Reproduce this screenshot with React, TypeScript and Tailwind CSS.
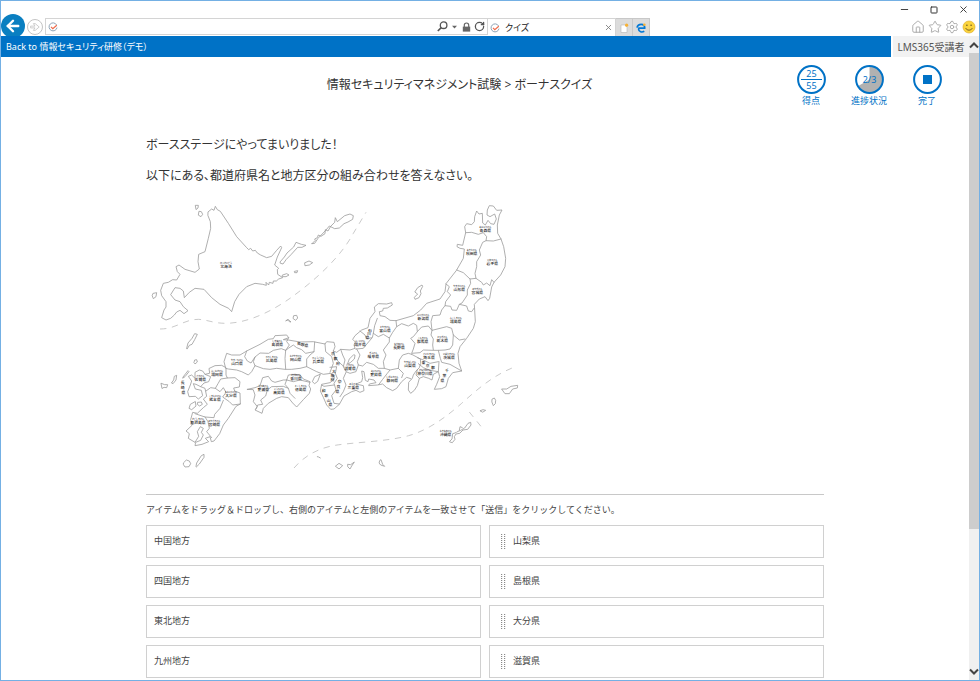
import { useState } from "react";
import { ArrowLeft, Home, Minus, RotateCw, Settings, Square, Star, X } from "lucide-react";

interface MapLabel {
  name: string;
  kana: string;
  x: number;
  y: number;
}

interface StackedLabel {
  chars: { c: string; x: number; y: number }[];
}

const groups = ["中国地方", "四国地方", "東北地方", "九州地方"];
const prefectures = ["山梨県", "島根県", "大分県", "滋賀県"];

// Horizontal labels, centred on x with y as the baseline
const labels: MapLabel[] = [
  { name: "北海道", kana: "ほっかいどう", x: 258, y: 218 },
  { name: "青森県", kana: "あおもりけん", x: 1036, y: 111 },
  { name: "秋田県", kana: "あきたけん", x: 995, y: 180 },
  { name: "岩手県", kana: "いわてけん", x: 1057, y: 209 },
  { name: "山形県", kana: "やまがたけん", x: 958, y: 287 },
  { name: "宮城県", kana: "みやぎけん", x: 1012, y: 298 },
  { name: "福島県", kana: "ふくしまけん", x: 947, y: 384 },
  { name: "新潟県", kana: "にいがたけん", x: 850, y: 376 },
  { name: "富山県", kana: "とやまけん", x: 735, y: 411 },
  { name: "福井県", kana: "ふくいけん", x: 660, y: 452 },
  { name: "岐阜県", kana: "ぎふけん", x: 700, y: 489 },
  { name: "長野県", kana: "ながのけん", x: 777, y: 461 },
  { name: "群馬県", kana: "ぐんまけん", x: 848, y: 445 },
  { name: "栃木県", kana: "とちぎけん", x: 907, y: 441 },
  { name: "埼玉県", kana: "さいたまけん", x: 867, y: 491 },
  { name: "茨城県", kana: "いばらきけん", x: 927, y: 491 },
  { name: "山梨県", kana: "やまなしけん", x: 810, y: 516 },
  { name: "愛知県", kana: "あいちけん", x: 708, y: 544 },
  { name: "静岡県", kana: "しずおかけん", x: 757, y: 561 },
  { name: "神奈川県", kana: "かながわけん", x: 855, y: 540 },
  { name: "滋賀県", kana: "しがけん", x: 630, y: 526 },
  { name: "三重県", kana: "みえけん", x: 640, y: 583 },
  { name: "島根県", kana: "しまねけん", x: 412, y: 452 },
  { name: "山口県", kana: "やまぐちけん", x: 291, y: 509 },
  { name: "広島県", kana: "ひろしまけん", x: 395, y: 502 },
  { name: "岡山県", kana: "おかやまけん", x: 467, y: 499 },
  { name: "兵庫県", kana: "ひょうごけん", x: 535, y: 503 },
  { name: "福岡県", kana: "ふくおかけん", x: 231, y: 543 },
  { name: "佐賀県", kana: "さがけん", x: 181, y: 558 },
  { name: "熊本県", kana: "くまもとけん", x: 225, y: 617 },
  { name: "大分県", kana: "おおいたけん", x: 273, y: 607 },
  { name: "鹿児島県", kana: "かごしまけん", x: 174, y: 687 },
  { name: "宮崎県", kana: "みやざきけん", x: 223, y: 692 },
  { name: "愛媛県", kana: "えひめけん", x: 370, y: 588 },
  { name: "高知県", kana: "こうちけん", x: 417, y: 597 },
  { name: "香川県", kana: "かがわけん", x: 468, y: 556 },
  { name: "徳島県", kana: "とくしまけん", x: 482, y: 588 },
  { name: "沖縄県", kana: "おきなわけん", x: 917, y: 724 },
];

// Labels whose characters step down the shape of a narrow prefecture
const stacked: StackedLabel[] = [
  { chars: [{ c: "石", x: 690, y: 410 }, { c: "川", x: 687, y: 420 }, { c: "県", x: 682, y: 431 }] },
  { chars: [{ c: "鳥", x: 477, y: 449 }, { c: "取", x: 488, y: 452 }, { c: "県", x: 499, y: 456 }] },
  { chars: [{ c: "長", x: 128, y: 568 }, { c: "崎", x: 128, y: 583 }, { c: "県", x: 130, y: 597 }] },
  { chars: [{ c: "千", x: 921, y: 530 }, { c: "葉", x: 913, y: 546 }, { c: "県", x: 907, y: 562 }] },
  { chars: [{ c: "東", x: 850, y: 507 }, { c: "京", x: 863, y: 516 }, { c: "都", x: 879, y: 522 }] },
  { chars: [{ c: "京", x: 579, y: 480 }, { c: "都", x: 586, y: 495 }, { c: "府", x: 594, y: 510 }] },
  { chars: [{ c: "大", x: 582, y: 533 }, { c: "阪", x: 578, y: 546 }, { c: "府", x: 577, y: 559 }] },
  { chars: [{ c: "奈", x: 599, y: 565 }, { c: "良", x: 595, y: 580 }, { c: "県", x: 592, y: 595 }] },
  { chars: [{ c: "和", x: 551, y: 592 }, { c: "歌", x: 559, y: 605 }, { c: "山", x: 566, y: 620 }, { c: "県", x: 571, y: 634 }] },
];

const hokkaido = [
  "M205 50L215 42L222 46L226 34L232 44L241 49L265 85L290 125L320 158L326 164L332 160L338 168L346 166L352 174L362 180L380 188L395 184L410 166L422 153L425 158L412 186L404 210L416 220L412 224L413 238L428 248L416 252L409 258L400 258L399 265L388 262L386 270L378 262L379 271L368 268L345 265L320 275L297 298L284 320L275 350L266 340L240 328L215 308L192 283L165 280L148 292L133 308L130 288L120 280L105 278L92 299L105 315L120 320L130 335L144 347L132 356L120 346L110 351L103 360L92 370L78 375L65 368L72 345L78 336L78 320L65 302L62 286L70 265L85 262L98 254L110 255L120 238L112 230L108 215L117 210L135 223L165 232L178 222L174 200L176 178L195 170L205 130L212 100L211 80L204 62Z",
  "M167 31h8l-1 8l-5 4Z",
  "M178 49l6 1l4 8l-5 7l-7-4Z",
  "M40 295l10-2l-2 12l-8 6l-3-8Z",
  "M421 200l12-14l8-12l20-18l7-14l16 6l14 3l-12 6l-13 0l-20 22l-14 14l-10 14l-7-2Z",
  "M516 146l10-10l-2-4l8-4l3-8l8 4l12-8l1-12l8 4l8-14l12-12l2-14l6 12l22-18l16-5l10 5l-2 11l-14 8l-12 5l-14 13l-14 2l-16-8l-10 12l-24 25l-10 15l-8 1Z",
  "M495 203l12-5l11 5l-10 7l-12 2Z",
  "M464 229l9-2l-2 6l-6 0Z",
  "M428 240l12-4l7 4l-9 5l-10 0Z",
  "M438 377l6-4l9 8l-5 -1l-4-4Z",
  "M462 362l8-1l3 8l-6 7l-7-5Z",
];

const honshu =
  "M950 225L970 190L973 162L960 160L951 155L952 148L968 151L977 113L974 95L980 86L995 89L1003 80L1004 65L1010 48L1017 57L1027 55L1028 84L1036 90L1044 76L1052 86L1062 88L1069 72L1064 57L1050 65L1041 60L1042 45L1048 32L1060 33L1070 46L1086 45L1078 60L1072 90L1073 115L1083 132L1091 155L1097 190L1095 215L1082 240L1062 262L1055 276L1049 310L1044 317L1035 305L1018 312L1003 328L1004 345L1006 380L1000 400L980 430L960 455L954 475L957 505L965 528L938 533L925 550L918 575L905 581L883 583L890 568L899 545L895 530L880 538L876 555L866 550L850 545L838 550L832 572L823 586L812 595L805 585L806 562L815 552L800 547L785 560L770 580L758 587L740 578L728 567L712 570L686 572L688 567L708 563L702 555L686 552L684 560L676 556L672 530L665 528L668 548L665 560L648 567L670 572L672 587L660 592L648 586L635 590L612 603L598 628L582 642L572 643L560 630L550 607L541 588L545 568L570 563L582 553L582 540L573 535L550 538L530 530L510 520L500 515L480 520L455 523L435 523L410 520L390 523L370 521L345 512L335 530L325 540L305 530L290 525L265 522L257 520L252 500L260 475L275 480L300 480L320 468L360 448L385 433L400 431L405 422L440 420L446 428L430 434L445 435L480 441L520 440L555 447L560 440L582 442L585 455L580 468L590 472L602 463L630 465L645 460L642 450L646 441L638 433L645 422L665 405L684 398L690 370L705 350L703 336L715 326L740 327L755 323L757 330L742 339L730 340L728 348L718 350L720 362L735 365L750 376L768 377L820 362L842 345L860 325L900 312L915 290L918 267Z";

const borders = [
  "M977 113L995 112L1015 118L1030 113L1040 125L1038 137L1060 138L1083 132",
  "M1038 137L1028 142L1018 165L1022 180L1010 200L1010 215L1005 235L1008 250L990 252L970 233L950 225",
  "M1008 250L1025 262L1030 270L1040 264L1050 272L1055 254L1062 262",
  "M990 252L992 265L982 285L982 300L966 324L958 328L980 333L985 348L995 350L1002 340",
  "M918 267L928 275L922 290L932 300L917 320L915 332L932 334L936 345L950 346L958 328",
  "M915 332L905 345L900 360L878 362L873 380L876 406L900 400L920 395L935 400L940 420L958 435L975 432",
  "M768 377L770 395L785 386L805 393L820 385L830 391L832 410L845 396L865 393L875 405",
  "M712 370L704 392L700 415L715 425L730 418L748 429L758 412L770 395",
  "M748 429L748 441L730 465L738 480L730 500L733 520",
  "M660 408L675 420L680 431L697 428L700 415M695 430L678 450L670 460L647 462",
  "M650 462L660 480L652 500L655 510L668 513L680 502L700 508L715 520L733 520L750 525L742 535L728 553L716 569",
  "M750 525L775 520L790 535L785 548M775 520L778 495L788 480L805 475L815 478",
  "M832 410L820 425L812 430L825 445L820 462L815 475L840 473L850 465L880 466L895 466",
  "M876 406L873 420L880 432L878 450L880 465M940 420L938 450L930 462L915 465L895 466L901 490L905 502L930 508L965 528",
  "M815 478L832 487L841 492L842 505L838 518L828 528L820 540L817 550",
  "M832 488L850 495L870 505L895 500M835 506L850 518L870 526L895 530L897 500M832 524L828 540L838 550",
  "M640 480L628 492L622 508L632 502L643 492L645 482Z",
  "M602 463L608 480L615 495L610 515L618 530L630 535L648 530L655 510M618 532L610 550L618 570L610 590L600 605",
  "M580 468L585 485L595 500L612 515M570 517L590 515L586 535L592 550L582 565L588 585L575 602L582 625L598 627",
  "M555 447L557 470L575 485L580 505L570 532M545 570L552 574L582 570",
  "M524 441L522 470L510 480L500 492L500 515M437 466L445 460L460 450L470 458L485 464L497 475L522 470",
  "M437 466L435 490L437 522M446 428L440 440L448 450L437 466L424 461L400 466L386 475L360 474L345 486L340 500L345 512",
  "M320 468L314 485L322 498L333 504L345 486",
];

const islands = [
  // Shikoku
  "M322 583L345 578L360 572L368 548L385 544L395 558L405 562L430 555L440 555L445 540L465 538L480 540L490 552L510 560L507 572L512 582L508 595L490 614L470 636L458 624L445 608L425 605L410 610L385 625L370 640L366 655L345 645L352 635L340 620L345 600L340 585Z",
  "M440 555L460 560L480 555L510 562M440 555L435 568L445 580L450 595L465 610M348 642L353 630L368 628L362 615L377 603L382 585L395 575L430 574L445 580",
  "M540 538L524 545L517 560L524 566L532 560Z",
  // Kyushu
  "M208 520L225 512L245 511L258 518L258 540L262 549L285 548L300 560L298 576L281 579L284 588L300 594L301 627L288 634L265 670L250 690L239 716L222 738L214 740L210 725L196 730L206 740L186 748L165 752L167 742L182 736L190 720L184 712L190 700L181 695L172 710L176 724L165 742L145 730L148 716L138 708L157 690L152 674L158 652L172 655L190 638L202 628L190 612L200 604L195 580L182 575L168 568L160 566L166 582L184 586L188 602L175 612L166 604L147 605L143 590L151 570L155 558L145 544L155 540L165 550L165 532L178 525L188 528L195 538L208 535Z",
  "M195 538L212 545L206 560L192 564L182 575M262 549L242 552L234 566L226 580L240 590L250 578L258 592L248 606L268 620L278 630L301 627M226 580L212 578L198 588M250 616L240 640L224 658L222 668L195 666L165 656M195 666L204 680L208 700L200 710L215 728",
  "M165 620l-14 8l-4 12l8 4l12-10Z",
  "M174 622l10-1l3 7l-8 5l-6-4Z",
  // Outlying islands
  "M130 545l14-18l3 3l-12 15l-6 4Z",
  "M95 563l6-8l2-11l7-3l-2 14l-8 10Z",
  "M64 565l10 4l9 0l-3 9l-8-1l-5 3Z",
  "M162 502l2-7l6-1l2 7l-6 5Z",
  "M140 460l4-16l12-14l8-14l8 2l-8 16l-8 14l-8 3l-6 10Z",
  "M131 803l8-8l9 3l4 8l-5 9l-12 1l-4-6Z",
  "M168 814l2-10l14-22l8-4l0 9l-14 20l-8 8Z",
  "M825 290l8-12l13-8l2 4l-7 14l2 8l-6 12l-12 5l-2-6l9-9Z",
  "M587 813l10-8l11 7l-10 9Z",
  "M624 808l8 1l11-8l-8 12l-5 9l-6-6Z",
  "M720 796l3-2l5 14l6 6l-12-4l-4-5Z",
  "M1086 582l14 0l13-8l20-3l-1 8l-14 3l-10 14l-12 0Z",
  "M1057 612l6-3l4 7l-1 10l-6 6l-4-10Z",
  "M1021 647l8-3l8 2l-8 5Z",
  "M930 738l6-6l2-16l10-3l2-2l12-5l12-7l10-14l8-3l1 8l-10 13l-14 2l-10 10l-11 2l-5 8l2 8l-8 10l-7-2Z",
  "M958 706l2-11l7 3",
  "M532 785l4 1l5 3",
];

const divides = [
  "M60 402C110 402 130 373 176 373C210 376 220 385 260 385C330 383 400 345 450 310C520 260 600 190 640 115L678 52",
  "M462 819C500 775 545 758 585 751C640 742 740 740 806 722C870 704 925 660 965 625C1010 585 1060 540 1124 516",
  "M988 651L1026 698",
];

function JapanMap() {
  return (
    <svg viewBox="18 0 1140 840" className="block w-[380px] max-w-full" role="img" aria-label="日本地図">
      <g fill="none" stroke="#9a9a9a" strokeWidth="2.4" strokeLinejoin="round" strokeLinecap="round">
        {hokkaido.map((d) => (
          <path key={d} d={d} />
        ))}
        <path d={honshu} />
        {borders.map((d) => (
          <path key={d} d={d} />
        ))}
        {islands.map((d) => (
          <path key={d} d={d} />
        ))}
      </g>
      <g fill="none" stroke="#bcbcbc" strokeWidth="2.4" strokeDasharray="19 17">
        {divides.map((d) => (
          <path key={d} d={d} />
        ))}
      </g>
      <g fill="#222" textAnchor="middle">
        {labels.map((l) => (
          <g key={l.name}>
            <text x={l.x} y={l.y} fontSize="11.5" fontWeight="500">
              {l.name}
            </text>
            <text x={l.x} y={l.y - 12} fontSize="6" fontWeight="500">
              {l.kana}
            </text>
          </g>
        ))}
        {stacked.map((s) =>
          s.chars.map((ch) => (
            <text key={`${ch.x}-${ch.y}`} x={ch.x} y={ch.y} fontSize="11.5" fontWeight="500">
              {ch.c}
            </text>
          ))
        )}
      </g>
    </svg>
  );
}

function SiteIcon() {
  return (
    <svg viewBox="0 0 10 10" className="size-[10px] shrink-0" fill="none">
      <path d="M8.6 3A4 4 0 1 0 9 5.6" stroke="#8fa3b5" strokeWidth="1" />
      <path d="M3 4.8L4.8 6.6L8.8 3.2" stroke="#ee6a4a" strokeWidth="1.2" />
    </svg>
  );
}

function BrowserChrome() {
  return (
    <header className="shrink-0 bg-white">
      <div className="flex h-[17px] items-center justify-end gap-[18px] pr-[10px] text-[#333]">
        <button aria-label="最小化"><Minus className="size-[11px]" strokeWidth={2} /></button>
        <button aria-label="最大化" className="px-[2px]"><Square className="size-2" strokeWidth={3} /></button>
        <button aria-label="閉じる"><X className="size-[11px]" strokeWidth={2} /></button>
      </div>
      <div className="flex h-[18px] items-start">
        <div className="flex w-11 shrink-0 items-center">
          <button aria-label="戻る" className="-mt-1 h-[22px] w-6 overflow-hidden">
            <span className="flex size-6 items-center justify-center rounded-full bg-[#0a7fc1] text-white">
              <ArrowLeft className="size-[18px]" strokeWidth={3.2} />
            </span>
          </button>
          <button aria-label="進む" className="ml-[2px] flex size-4 items-center justify-center rounded-full border border-[#c4c4c4]">
            <svg viewBox="0 0 10 10" className="size-[10px]" fill="none" stroke="#c0c0c0" strokeWidth=".8">
              <path d="M.6 4.1H5L3.4 1.6H5.2L9.2 5L5.2 8.4H3.4L5 5.9H.6Z" />
            </svg>
          </button>
        </div>
        <div className="flex h-[17px] w-[443px] items-center border border-[#d4d4d4] px-[2px]">
          <SiteIcon />
          <input aria-label="アドレス" className="min-w-0 flex-1 bg-transparent px-1 text-[9px] outline-none" />
          <div className="flex items-center gap-[2px] text-[#555]">
            <button aria-label="検索">
              <svg viewBox="0 0 11 11" className="size-[11px]" fill="none" stroke="#555" strokeWidth="1.3">
                <circle cx="6.6" cy="4.2" r="3.3" />
                <path d="M4.2 6.6L.8 10" strokeWidth="1.6" />
              </svg>
            </button>
            <button aria-label="候補">
              <svg viewBox="0 0 6 4" className="mx-[2px] h-1 w-[5px]"><path d="M0 0.5h6L3 3.8Z" fill="#666" /></svg>
            </button>
            <svg viewBox="0 0 9 10" className="mx-px h-[10px] w-[9px]">
              <path d="M2.3 5V3.2a2.2 2.2 0 0 1 4.4 0V5" fill="none" stroke="#666" strokeWidth="1.2" />
              <rect x=".8" y="4.6" width="7.4" height="5" fill="#666" />
            </svg>
            <button aria-label="更新"><RotateCw className="size-[11px]" strokeWidth={2.8} /></button>
          </div>
        </div>
        <div className="flex h-[18px] w-[128px] items-center border-t border-r border-[#d4d4d4] px-[2px]">
          <SiteIcon />
          <span className="ml-[5px] flex-1 text-[9px] leading-4 text-[#222] [font-feature-settings:'palt']">クイズ</span>
          <button aria-label="タブを閉じる"><X className="size-[9px] text-[#777]" strokeWidth={2.2} /></button>
        </div>
        <button aria-label="新しいタブ" className="flex h-[18px] w-[17px] items-center justify-center border border-b-0 border-l-0 border-[#c8c8c8] bg-[#dcdcdc]">
          <svg viewBox="0 0 10 10" className="size-[10px]">
            <path d="M2 2h4l2 2v5.5H2Z" fill="#fff" stroke="#b5b5b5" strokeWidth=".6" />
            <circle cx="7.6" cy="2.2" r="1.6" fill="#f8b133" />
          </svg>
        </button>
        <button aria-label="Edge で開く" className="flex h-[18px] w-[17px] items-center justify-center border border-b-0 border-l-0 border-[#c8c8c8] bg-[#dcdcdc]">
          <svg viewBox="0 0 10 10" className="size-[10px]" fill="none">
            <path d="M8.3 8.3C6 9.6 2.7 9 2.6 6.3C2.6 5.9 2.7 5.4 2.9 5.1H8.7C8.9 3 7.5 1.3 5.2 1.3C3 1.3 1.4 2.7 1 4.6" stroke="#0078d7" strokeWidth="1.7" />
            <circle cx="8.3" cy="1.8" r="1.3" fill="#f8b133" />
          </svg>
        </button>
        <div className="ml-auto flex h-[17px] items-center gap-[3px] pr-[3px] text-[#a6a6a6]">
          <button aria-label="ホーム"><Home className="size-[14px]" strokeWidth={1.6} /></button>
          <button aria-label="お気に入り"><Star className="size-[14px]" strokeWidth={1.6} /></button>
          <button aria-label="設定"><Settings className="size-[14px]" strokeWidth={1.6} /></button>
          <button aria-label="フィードバック">
            <svg viewBox="0 0 14 14" className="size-[14px]" fill="none">
              <circle cx="7" cy="7" r="6" fill="#fbd43d" stroke="#e0b02c" strokeWidth=".7" />
              <circle cx="4.9" cy="5.2" r=".8" fill="#6a5520" />
              <circle cx="9.1" cy="5.2" r=".8" fill="#6a5520" />
              <path d="M3.7 8.2C5 10.8 9 10.8 10.3 8.2" stroke="#6a5520" strokeWidth=".9" />
            </svg>
          </button>
        </div>
      </div>
    </header>
  );
}

function StatusButtons() {
  return (
    <div className="flex shrink-0 pr-[13px] text-[9px] leading-[14px] text-[#0072c6]">
      <div className="flex w-[58px] flex-col items-center">
        <svg viewBox="0 0 29 29" className="size-[29px]">
          <circle cx="14.5" cy="14.5" r="13.4" fill="none" stroke="#0072c6" strokeWidth="2" />
          <path d="M4 14.5H25" stroke="#0072c6" strokeWidth="1" />
          <text x="14.5" y="11.5" fontSize="9" textAnchor="middle" fill="#0072c6">25</text>
          <text x="14.5" y="23.5" fontSize="9" textAnchor="middle" fill="#0072c6">55</text>
        </svg>
        <span>得点</span>
      </div>
      <div className="flex w-[58px] flex-col items-center">
        <svg viewBox="0 0 29 29" className="size-[29px]">
          <path d="M14.5 14.5V1A13.5 13.5 0 1 1 2.8 21.2Z" fill="#b1b1b1" />
          <circle cx="14.5" cy="14.5" r="13.4" fill="none" stroke="#0072c6" strokeWidth="2" />
          <text x="14.5" y="18" fontSize="9" textAnchor="middle" fill="#0072c6">2/3</text>
        </svg>
        <span>進捗状況</span>
      </div>
      <button className="flex w-[58px] flex-col items-center">
        <svg viewBox="0 0 29 29" className="size-[29px]">
          <circle cx="14.5" cy="14.5" r="13.4" fill="none" stroke="#0072c6" strokeWidth="2" />
          <rect x="10" y="10" width="9" height="9" fill="#0072c6" />
        </svg>
        <span>完了</span>
      </button>
    </div>
  );
}

function Grip() {
  return (
    <svg viewBox="0 0 5 16" className="h-4 w-[5px] shrink-0" fill="#8a8a8a">
      {[0, 2, 4, 6, 8, 10, 12, 14].map((y) => (
        <g key={y}>
          <rect x="0" y={y} width="1.2" height="1" />
          <rect x="3" y={y} width="1.2" height="1" />
        </g>
      ))}
    </svg>
  );
}

export default function App() {
  const [items, setItems] = useState(prefectures);
  const [dragged, setDragged] = useState<number | null>(null);

  const handleDrop = (target: number) => {
    if (dragged === null) return;
    const next = [...items];
    const [moved] = next.splice(dragged, 1);
    next.splice(target, 0, moved);
    setItems(next);
    setDragged(null);
  };

  return (
    <div className="flex h-screen flex-col overflow-hidden border border-[#74b0e4] bg-white font-['Noto_Sans','Noto_Sans_CJK_JP',sans-serif] text-[#444]">
      <BrowserChrome />
      <div className="flex min-h-0 flex-1">
        <div className="flex min-w-0 flex-1 flex-col">
          <nav className="flex h-[21px] shrink-0 items-center leading-4">
            <a href="#" className="flex h-full flex-1 items-center bg-[#0072c6] pl-[5px] text-[9px] text-white [font-feature-settings:'palt']">
              Back to 情報セキュリティ研修（デモ）
            </a>
            <div className="ml-[2px] flex h-full w-[76px] items-center justify-center bg-[#f2f2f2] text-[10px] text-[#555]">LMS365受講者</div>
          </nav>

          <main className="min-h-0 flex-1 overflow-hidden">
            <div className="flex items-start pt-2">
              <h1 className="mt-[10px] flex-1 pl-[136px] text-center text-[12px] leading-5 text-[#333] [font-feature-settings:'palt']">
                情報セキュリティマネジメント試験 &gt; ボーナスクイズ
              </h1>
              <StatusButtons />
            </div>

            <div className="mx-[145px] pt-[27px]">
              <div className="text-[12px] leading-5 text-[#333] [font-feature-settings:'palt']">
                <p>ボースステージにやってまいりました！</p>
                <p className="mt-[11px]">以下にある、都道府県名と地方区分の組み合わせを答えなさい。</p>
              </div>
              <div className="mt-[9px]">
                <JapanMap />
              </div>

              <hr className="mt-[19px] border-[#c8c8c8]" />
              <p className="mt-[7px] text-[9px] leading-4">
                アイテムをドラッグ＆ドロップし、右側のアイテムと左側のアイテムを一致させて「送信」をクリックしてください。
              </p>

              <div className="mt-[7px] grid grid-cols-2 gap-x-2 text-[9px] leading-4">
                <ul className="space-y-[7px]">
                  {groups.map((g) => (
                    <li key={g} className="flex h-[33px] items-center border border-[#d0d0d0] px-[7px] pb-[2px]">
                      {g}
                    </li>
                  ))}
                </ul>
                <ul className="space-y-[7px]">
                  {items.map((name, i) => (
                    <li
                      key={name}
                      draggable
                      onDragStart={() => setDragged(i)}
                      onDragOver={(e) => e.preventDefault()}
                      onDrop={() => handleDrop(i)}
                      className="flex h-[33px] cursor-move items-center gap-[7px] border border-[#d0d0d0] px-[11px]"
                    >
                      <Grip />
                      <span className="pb-[2px]">{name}</span>
                    </li>
                  ))}
                </ul>
              </div>
            </div>
          </main>
        </div>

        {/* Scrollbar */}
        <div className="flex w-[10px] shrink-0 flex-col bg-[#f0f0f0]">
          <button aria-label="上へスクロール" className="flex h-[17px] items-center justify-center">
            <svg viewBox="0 0 10 8" className="h-2 w-[10px]" fill="none" stroke="#444" strokeWidth="2">
              <path d="M1 6.5L5 2.5L9 6.5" />
            </svg>
          </button>
          <div className="flex-[475] bg-[#cdcdcd]" />
          <div className="flex-[134]" />
          <button aria-label="下へスクロール" className="flex h-[17px] items-center justify-center">
            <svg viewBox="0 0 10 8" className="h-2 w-[10px]" fill="none" stroke="#444" strokeWidth="2">
              <path d="M1 1.5L5 5.5L9 1.5" />
            </svg>
          </button>
        </div>
      </div>
    </div>
  );
}
